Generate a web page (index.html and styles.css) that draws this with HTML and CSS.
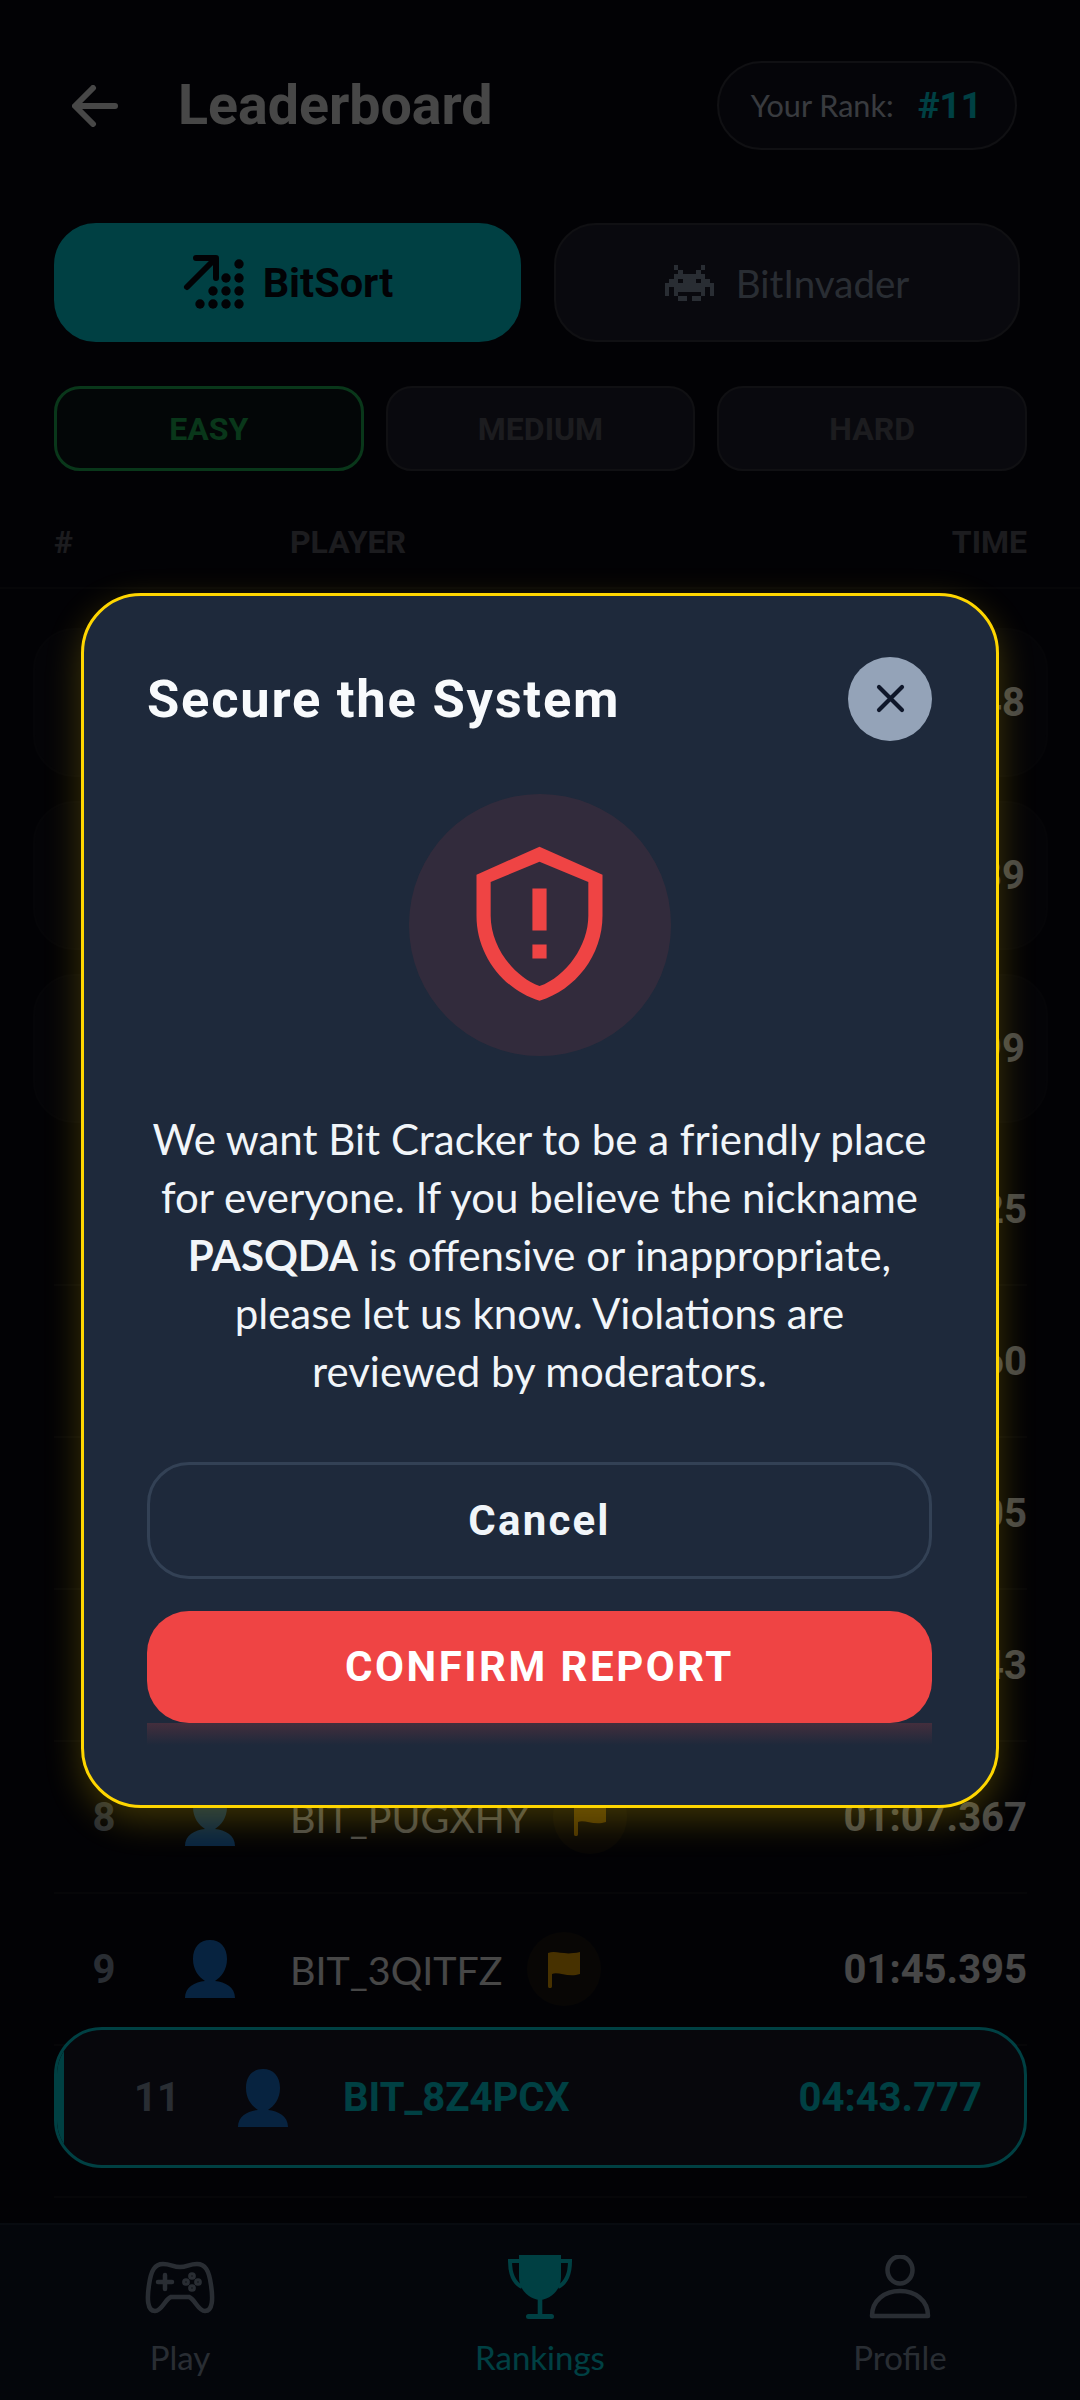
FILE: index.html
```html
<!DOCTYPE html>
<html lang="en">
<head>
    <meta charset="UTF-8">
    <meta name="viewport" content="width=device-width, initial-scale=1.0">
    <title>Leaderboard</title>
    <link rel="stylesheet" href="styles.css">
</head>
<body>
    <div class="screen">
        <header class="top">
            <svg class="back" viewBox="0 0 46 42" fill="none" stroke="currentColor" stroke-width="6" stroke-linecap="round" stroke-linejoin="round"><path d="M43 21H4M21 3 3 21l18 18"/></svg>
            <h1>Leaderboard</h1>
            <div class="rank-pill">Your Rank: <b>#11</b></div>
        </header>

        <div class="tabs">
            <div class="tab tab-on">
                <svg class="tab-icon" viewBox="0 0 63 57" fill="currentColor">
                    <path d="M5 33 33 5M14 4h20v20" fill="none" stroke="currentColor" stroke-width="6" stroke-linecap="round" stroke-linejoin="round"/>
                    <circle cx="57" cy="10" r="4.7"/>
                    <circle cx="44" cy="24" r="4.7"/><circle cx="57" cy="24" r="4.7"/>
                    <circle cx="31" cy="37" r="4.7"/><circle cx="44" cy="37" r="4.7"/><circle cx="57" cy="37" r="4.7"/>
                    <circle cx="18" cy="50" r="4.7"/><circle cx="31" cy="50" r="4.7"/><circle cx="44" cy="50" r="4.7"/><circle cx="57" cy="50" r="4.7"/>
                </svg>
                <span>BitSort</span>
            </div>
            <div class="tab">
                <svg class="invader" viewBox="0 0 11 8" fill="currentColor" shape-rendering="crispEdges">
                    <path d="M2 0h1v1H2zM8 0h1v1H8zM3 1h1v1H3zM7 1h1v1H7zM2 2h7v1H2zM1 3h2v1H1zM4 3h3v1H4zM8 3h2v1H8zM0 4h11v1H0zM0 5h1v2H0zM2 5h7v1H2zM10 5h1v2h-1zM2 6h1v1H2zM8 6h1v1H8zM3 7h2v1H3zM6 7h2v1H6z"/>
                </svg>
                <span>BitInvader</span>
            </div>
        </div>

        <div class="levels">
            <div class="level level-on">EASY</div>
            <div class="level">MEDIUM</div>
            <div class="level">HARD</div>
        </div>

        <div class="thead">
            <span class="th-rank">#</span>
            <span class="th-player">PLAYER</span>
            <span class="th-time">TIME</span>
        </div>

        <div class="list">
            <div class="row card">
                <span class="rank">1</span>
                <svg class="avatar" viewBox="0 0 50 58"><path d="M25 0C35 0 42 7 42 19C42 30 36 37 30 41C40 42 50 47 50 58H0C0 47 10 42 20 41C14 37 8 30 8 19C8 7 15 0 25 0Z"/></svg>
                <span class="name">BIT_K2MWQA</span>
                <span class="time">00:14.248</span>
            </div>
            <div class="row card">
                <span class="rank">2</span>
                <svg class="avatar" viewBox="0 0 50 58"><path d="M25 0C35 0 42 7 42 19C42 30 36 37 30 41C40 42 50 47 50 58H0C0 47 10 42 20 41C14 37 8 30 8 19C8 7 15 0 25 0Z"/></svg>
                <span class="name">BIT_R7LTEN</span>
                <span class="time">00:18.639</span>
            </div>
            <div class="row card card-last">
                <span class="rank">3</span>
                <svg class="avatar" viewBox="0 0 50 58"><path d="M25 0C35 0 42 7 42 19C42 30 36 37 30 41C40 42 50 47 50 58H0C0 47 10 42 20 41C14 37 8 30 8 19C8 7 15 0 25 0Z"/></svg>
                <span class="name">BIT_Y4DZUC</span>
                <span class="time">00:23.099</span>
            </div>
            <div class="row">
                <span class="rank">4</span>
                <svg class="avatar" viewBox="0 0 50 58"><path d="M25 0C35 0 42 7 42 19C42 30 36 37 30 41C40 42 50 47 50 58H0C0 47 10 42 20 41C14 37 8 30 8 19C8 7 15 0 25 0Z"/></svg>
                <span class="name">PASQDA</span>
                <span class="time">00:31.725</span>
            </div>
            <div class="row">
                <span class="rank">5</span>
                <svg class="avatar" viewBox="0 0 50 58"><path d="M25 0C35 0 42 7 42 19C42 30 36 37 30 41C40 42 50 47 50 58H0C0 47 10 42 20 41C14 37 8 30 8 19C8 7 15 0 25 0Z"/></svg>
                <span class="name">BIT_H9SVOB</span>
                <span class="time">00:42.860</span>
            </div>
            <div class="row">
                <span class="rank">6</span>
                <svg class="avatar" viewBox="0 0 50 58"><path d="M25 0C35 0 42 7 42 19C42 30 36 37 30 41C40 42 50 47 50 58H0C0 47 10 42 20 41C14 37 8 30 8 19C8 7 15 0 25 0Z"/></svg>
                <span class="name">BIT_J3XFGI</span>
                <span class="time">00:51.405</span>
            </div>
            <div class="row">
                <span class="rank">7</span>
                <svg class="avatar" viewBox="0 0 50 58"><path d="M25 0C35 0 42 7 42 19C42 30 36 37 30 41C40 42 50 47 50 58H0C0 47 10 42 20 41C14 37 8 30 8 19C8 7 15 0 25 0Z"/></svg>
                <span class="name">BIT_W6PAMT</span>
                <span class="time">00:59.743</span>
            </div>
            <div class="row">
                <span class="rank">8</span>
                <svg class="avatar" viewBox="0 0 50 58"><path d="M25 0C35 0 42 7 42 19C42 30 36 37 30 41C40 42 50 47 50 58H0C0 47 10 42 20 41C14 37 8 30 8 19C8 7 15 0 25 0Z"/></svg>
                <span class="name">BIT_PUGXHY</span>
                <span class="flag-badge"><svg viewBox="0 0 32 38"><path d="M0 3C9 0 15 6 32 2V24C20 28 10 21 4 24V36C4 39 0 39 0 36Z"/></svg></span>
                <span class="time">01:07.367</span>
            </div>
            <div class="row">
                <span class="rank">9</span>
                <svg class="avatar" viewBox="0 0 50 58"><path d="M25 0C35 0 42 7 42 19C42 30 36 37 30 41C40 42 50 47 50 58H0C0 47 10 42 20 41C14 37 8 30 8 19C8 7 15 0 25 0Z"/></svg>
                <span class="name">BIT_3QITFZ</span>
                <span class="flag-badge"><svg viewBox="0 0 32 38"><path d="M0 3C9 0 15 6 32 2V24C20 28 10 21 4 24V36C4 39 0 39 0 36Z"/></svg></span>
                <span class="time">01:45.395</span>
            </div>
            <div class="row">
                <span class="rank">10</span>
                <svg class="avatar" viewBox="0 0 50 58"><path d="M25 0C35 0 42 7 42 19C42 30 36 37 30 41C40 42 50 47 50 58H0C0 47 10 42 20 41C14 37 8 30 8 19C8 7 15 0 25 0Z"/></svg>
                <span class="name">BIT_N5CEVD</span>
                <span class="time">02:12.518</span>
            </div>

            <div class="my-row">
                <span class="rank">11</span>
                <svg class="avatar" viewBox="0 0 50 58"><path d="M25 0C35 0 42 7 42 19C42 30 36 37 30 41C40 42 50 47 50 58H0C0 47 10 42 20 41C14 37 8 30 8 19C8 7 15 0 25 0Z"/></svg>
                <span class="name">BIT_8Z4PCX</span>
                <span class="time">04:43.777</span>
            </div>
        </div>

        <nav class="nav">
            <div class="nav-item">
                <svg class="nav-icon" viewBox="0 0 70 64" fill="none" stroke="currentColor" stroke-width="4.5" stroke-linecap="round" stroke-linejoin="round">
                    <path d="M18 9C26 9 28 12 35 12S44 9 52 9C60 9 64 15 66 30 68 43 68 56 60 56 53 56 50 44 44 42H26C20 44 17 56 10 56 2 56 2 43 4 30 6 15 10 9 18 9Z"/>
                    <path d="M20 20v14M13 27h14"/>
                    <circle cx="47" cy="21" r="1.6"/><circle cx="47" cy="33" r="1.6"/><circle cx="41" cy="27" r="1.6"/><circle cx="53" cy="27" r="1.6"/>
                </svg>
                <span>Play</span>
            </div>
            <div class="nav-item nav-on">
                <svg class="nav-icon" viewBox="-3 0 70 64" fill="currentColor">
                    <path d="M11 6H2C2 18 6 28 14 32M53 6H62C62 18 58 28 50 32" fill="none" stroke="currentColor" stroke-width="4"/>
                    <path d="M11 0H53V22C53 34 44 44 32 45 20 44 11 34 11 22Z"/>
                    <rect x="29.7" y="44" width="4.6" height="16"/>
                    <rect x="18" y="59" width="28" height="5" rx="2.5"/>
                </svg>
                <span>Rankings</span>
            </div>
            <div class="nav-item">
                <svg class="nav-icon" viewBox="0 0 70 64" fill="none" stroke="currentColor" stroke-width="4.5" stroke-linejoin="round">
                    <ellipse cx="35" cy="15" rx="12.5" ry="13.5"/>
                    <path d="M7 61C7 45 20 36 35 36S63 45 63 61Z"/>
                </svg>
                <span>Profile</span>
            </div>
        </nav>

        <div class="scrim">
            <div class="modal">
                <div class="modal-head">
                    <h2>Secure the System</h2>
                    <div class="close">
                        <svg viewBox="0 0 29 29" fill="none" stroke="currentColor" stroke-width="4.2" stroke-linecap="round"><path d="M3 3l23 23M26 3 3 26"/></svg>
                    </div>
                </div>
                <div class="alert-circle">
                    <svg viewBox="0 0 24 24" fill="currentColor" fill-rule="evenodd"><path d="M12 2.25 4 5.8V11C4 16 7.4 20.4 12 21.8 16.6 20.4 20 16 20 11V5.8ZM12 4.15 18.2 6.73V11C18.2 14.8 15.4 18.7 12 19.95 8.6 18.7 5.8 14.8 5.8 11V6.73Z"/><path d="M11.1 7.55h1.8v5.33h-1.8zM11.1 14.67h1.8v1.78h-1.8z"/></svg>
                </div>
                <p class="modal-text">We want Bit Cracker to be a friendly place<br>for everyone. If you believe the nickname<br><b>PASQDA</b> is offensive or inappropriate,<br>please let us know. Violations are<br>reviewed by moderators.</p>
                <button type="button" class="btn-cancel">Cancel</button>
                <button type="button" class="btn-confirm">CONFIRM REPORT</button>
            </div>
        </div>
    </div>
</body>
</html>
```
FILE: styles.css
```css
* {
    box-sizing: border-box;
}
body {
    margin: 0;
    background-color: #0a0a14;
    font-family: "Lato", "Noto Sans", sans-serif;
    color: #fff;
}
.screen {
    position: relative;
    width: 1080px;
    height: 2400px;
    overflow: hidden;
    display: flex;
    flex-direction: column;
    background-color: #0a0a14;
}

/* header */
.top {
    display: flex;
    align-items: center;
    height: 89px;
    margin-top: 61px;
    padding: 0 63px 0 72px;
}
.back {
    width: 46px;
    height: 42px;
    color: #fff;
}
h1 {
    margin: 0 0 0 60px;
    font-family: "Roboto", sans-serif;
    font-size: 55.5px;
    font-weight: 700;
}
.rank-pill {
    display: flex;
    align-items: center;
    gap: 24px;
    height: 89px;
    margin-left: auto;
    padding: 0 33px 0 32px;
    font-size: 30.6px;
    color: #cbd5e1;
    background-color: rgba(34, 34, 51, 0.4);
    border: 2px solid #3a3a44;
    border-radius: 45px;
}
.rank-pill b {
    font-family: "Roboto", sans-serif;
    font-size: 37px;
    color: #00e5f0;
}

/* game tabs */
.tabs {
    display: grid;
    grid-template-columns: 467px 466px;
    gap: 33px;
    margin-top: 73px;
    padding-left: 54px;
}
.tab {
    height: 119px;
    display: flex;
    align-items: center;
    justify-content: center;
    gap: 22px;
    font-size: 38.5px;
    color: #94a3b8;
    background-color: #222233;
    border: 2px solid #3a3a44;
    border-radius: 42px;
}
.tab-on {
    gap: 18px;
    font-family: "Roboto", sans-serif;
    font-size: 41.5px;
    font-weight: 700;
    color: #0a0a14;
    background-color: #00e5f0;
    border-color: #00e5f0;
}
.tab-icon {
    width: 63px;
    height: 57px;
}
.invader {
    width: 49px;
    height: 36px;
}

/* difficulty */
.levels {
    display: grid;
    grid-template-columns: repeat(3, 1fr);
    gap: 22px;
    margin-top: 44px;
    padding: 0 53px 0 54px;
}
.level {
    height: 85px;
    display: flex;
    align-items: center;
    justify-content: center;
    font-family: "Roboto", sans-serif;
    font-size: 32px;
    font-weight: 700;
    color: #666670;
    background-color: #222233;
    border: 2px solid #3a3a44;
    border-radius: 26px;
}
.level-on {
    color: #22c55e;
    background-color: rgba(34, 197, 94, 0.08);
    border: 3px solid #22c55e;
}

/* table */
.thead {
    display: flex;
    align-items: center;
    height: 118px;
    padding: 25px 53px 0 54px;
    font-family: "Roboto", sans-serif;
    font-size: 32px;
    font-weight: 700;
    color: #666670;
    border-bottom: 2px solid #16161f;
}
.th-player {
    margin-left: 217px;
}
.th-time {
    margin-left: auto;
}
.list {
    position: relative;
    flex: 1;
    min-height: 0;
    overflow: hidden;
    padding: 39px 53px 0 54px;
}
.row {
    display: flex;
    align-items: center;
    height: 152px;
    border-bottom: 2px solid #16161f;
}
.card {
    height: 149px;
    margin: 0 -21px 24px;
    padding: 0 21px;
    background-color: #0f0f19;
    border: 2px solid #14141d;
    border-radius: 42px;
}
.card-last {
    margin-bottom: 11px;
}
.rank {
    width: 100px;
    text-align: center;
    font-family: "Roboto", sans-serif;
    font-size: 40px;
    font-weight: 700;
    color: #94a3b8;
}
.avatar {
    width: 50px;
    height: 58px;
    margin-left: 31px;
    fill: #1a7fe6;
}
.name {
    margin-left: 55px;
    font-size: 39.4px;
}
.time {
    margin-left: auto;
    font-family: "Roboto", sans-serif;
    font-size: 40px;
    font-weight: 700;
}
.flag-badge {
    display: flex;
    align-items: center;
    justify-content: center;
    width: 74px;
    height: 74px;
    margin-left: 24px;
    background-color: rgba(255, 176, 0, 0.08);
    border-radius: 50%;
}
.flag-badge svg {
    width: 32px;
    height: 38px;
    fill: #ffb000;
}

/* own rank, pinned over the list */
.my-row {
    position: absolute;
    left: 54px;
    right: 53px;
    bottom: 55px;
    height: 141px;
    display: flex;
    align-items: center;
    padding: 0 42px 0 50px;
    overflow: hidden;
    background-color: #1a1a2b;
    border: 3px solid #00e5f0;
    border-radius: 48px;
}
.my-row::before {
    content: "";
    position: absolute;
    left: 0;
    top: 0;
    bottom: 0;
    width: 7px;
    background-color: #00e5f0;
}
.my-row .name {
    font-family: "Roboto", sans-serif;
    font-size: 40px;
    font-weight: 700;
    color: #00e5f0;
}
.my-row .time {
    color: #00e5f0;
}

/* bottom nav */
.nav {
    display: flex;
    height: 177px;
    padding: 30px 0 0;
    background-color: #0f172a;
    border-top: 2px solid #1e293b;
}
.nav-item {
    width: 360px;
    display: flex;
    flex-direction: column;
    align-items: center;
    font-size: 33px;
    color: #94a3b8;
}
.nav-icon {
    width: 70px;
    height: 64px;
    margin-bottom: 18px;
}
.nav-on {
    color: #00e5f0;
}

/* modal */
.scrim {
    position: absolute;
    inset: 0;
    display: flex;
    align-items: center;
    justify-content: center;
    background-color: rgba(0, 0, 0, 0.72);
}
.modal {
    width: 918px;
    display: flex;
    flex-direction: column;
    padding: 61px 64px 82px 63px;
    background-color: #1e293b;
    border: 3px solid #ffd600;
    border-radius: 60px;
    box-shadow: 0 12px 36px rgba(255, 214, 0, 0.24);
}
.modal-head {
    display: flex;
    align-items: center;
    justify-content: space-between;
    height: 84px;
}
h2 {
    margin: 0;
    font-family: "Roboto", sans-serif;
    font-size: 52.5px;
    font-weight: 700;
    letter-spacing: 1.75px;
    color: #f8fafc;
}
.close {
    display: flex;
    align-items: center;
    justify-content: center;
    width: 84px;
    height: 84px;
    color: #0f172a;
    background-color: #94a3b8;
    border-radius: 50%;
}
.close svg {
    width: 29px;
    height: 29px;
}
.alert-circle {
    display: flex;
    align-items: center;
    justify-content: center;
    width: 262px;
    height: 262px;
    margin: 53px auto 54px;
    color: #ef4444;
    background-color: rgba(239, 68, 68, 0.1);
    border-radius: 50%;
}
.alert-circle svg {
    width: 189px;
    height: 189px;
    margin-bottom: 3px;
}
.modal-text {
    margin: 0 0 62px;
    font-size: 42px;
    line-height: 58px;
    text-align: center;
    white-space: nowrap;
    color: #f1f5f9;
}
button {
    font-family: "Roboto", sans-serif;
    font-weight: 700;
    cursor: pointer;
}
.btn-cancel {
    height: 117px;
    margin-bottom: 32px;
    font-size: 42px;
    letter-spacing: 2.2px;
    color: #f1f5f9;
    background-color: transparent;
    border: 3px solid #334155;
    border-radius: 42px;
}
.btn-confirm {
    position: relative;
    height: 112px;
    font-size: 42px;
    letter-spacing: 2.5px;
    color: #fff;
    background-color: #ef4444;
    border: 0;
    border-radius: 42px;
}
.btn-confirm::after {
    content: "";
    position: absolute;
    left: 0;
    right: 0;
    top: 100%;
    height: 22px;
    background: linear-gradient(rgba(239, 68, 68, 0.18), rgba(239, 68, 68, 0));
}
```
